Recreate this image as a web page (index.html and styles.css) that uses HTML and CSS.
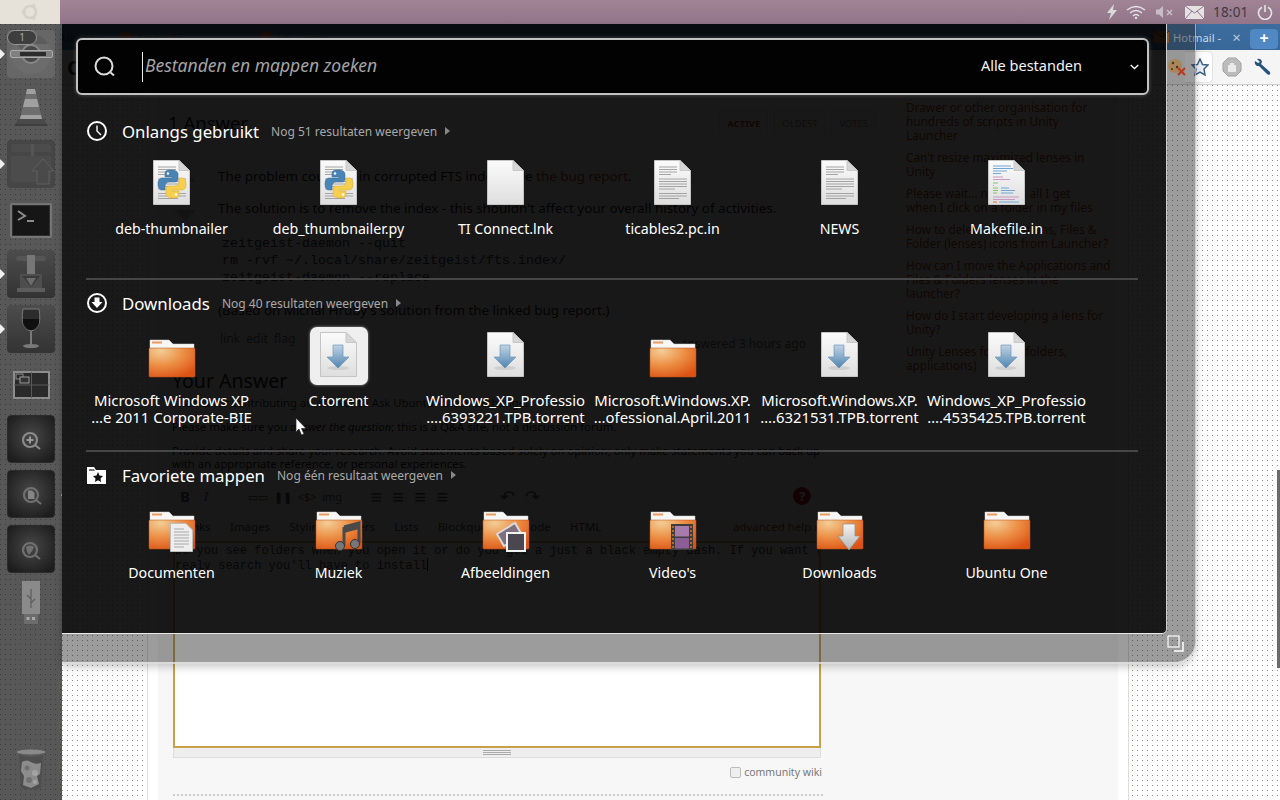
FILE: index.html
```html
<!DOCTYPE html>
<html lang="nl">
<head>
<meta charset="utf-8">
<title>Dash</title>
<link rel="stylesheet" href="styles.css">
</head>
<body>
<svg class="defs" width="0" height="0" aria-hidden="true">
  <defs>
    <linearGradient id="gDoc" x1="0" y1="0" x2="0" y2="1"><stop offset="0" stop-color="#fbfbfb"/><stop offset="1" stop-color="#dedede"/></linearGradient>
    <radialGradient id="gFolder" cx="0.25" cy="0.1" r="1"><stop offset="0" stop-color="#f3cd96"/><stop offset="0.5" stop-color="#ec8f45"/><stop offset="1" stop-color="#dc5213"/></radialGradient>
    <linearGradient id="gArrow" x1="0" y1="0" x2="0" y2="1"><stop offset="0" stop-color="#c2d4e4"/><stop offset="1" stop-color="#4f84b0"/></linearGradient>
    <linearGradient id="gGray" x1="0" y1="0" x2="0" y2="1"><stop offset="0" stop-color="#f4f4f4"/><stop offset="1" stop-color="#b4b4b4"/></linearGradient>

    <symbol id="doc" viewBox="0 0 64 48">
      <path d="M13.5 1.5H39L49.5 12V45.5H13.5Z" fill="url(#gDoc)" stroke="#c4c4c4"/>
      <path d="M39 1.5V11.5H49.5Z" fill="#d6d6d6" stroke="#c8c8c8"/>
    </symbol>
    <symbol id="lines" viewBox="0 0 64 48">
      <use href="#doc" width="64" height="48"/>
      <path d="M18 8h18M18 10.5h18M18 13h18M18 15.500h12M18 20h28M18 22.500h28M18 25h28M18 27.500h28M18 30h16M18 34.500h28M18 37h28M18 39.500h20" stroke="#a4a4a4" stroke-width="1"/>
    </symbol>
    <symbol id="python" viewBox="0 0 64 48">
      <use href="#lines" width="64" height="48"/>
      <path d="M31 11c-6 0-6 2-6 4v3h7v1h-10c-3 0-4 3-4 6s1 6 4 6h3v-4c0-2 2-4 4-4h6c2 0 3-1 3-3v-5c0-2-2-4-7-4z" fill="#4a84b5" stroke="#356a96" stroke-width=".5"/>
      <path d="M33 39c6 0 6-2 6-4v-3h-7v-1h10c3 0 4-3 4-6s-1-6-4-6h-3v4c0 2-2 4-4 4h-6c-2 0-3 1-3 3v5c0 2 2 4 7 4z" fill="#f6cf4f" stroke="#d4a92f" stroke-width=".5"/>
      <circle cx="28" cy="14.500" r="1.200" fill="#fff"/><circle cx="36" cy="35.500" r="1.200" fill="#fff"/>
    </symbol>
    <symbol id="code" viewBox="0 0 64 48">
      <use href="#doc" width="64" height="48"/>
      <path d="M18 7h18M18 9.500h20M18 12h14M18 14.500h8" stroke="#6fa8d6"/>
      <path d="M18 18h10M18 20.500h17" stroke="#c79ac0"/>
      <path d="M18 24h5M18 26.500h1M18 29h5M18 31.500h5M18 34h4" stroke="#84c76a"/>
      <path d="M26 29h8M26 31.500h14M26 34h12" stroke="#6fa8d6"/>
      <path d="M18 38h26M18 40.500h22" stroke="#c79ac0"/>
      <path d="M18 43h4" stroke="#d0704a"/><path d="M24 43h20" stroke="#6fa8d6"/>
    </symbol>
    <symbol id="torrent" viewBox="0 0 64 48">
      <use href="#doc" width="64" height="48"/>
      <ellipse cx="31" cy="37" rx="11" ry="2" fill="#cfcfcf"/>
      <path d="M26 14H36V26H42L31 37L20 26H26Z" fill="url(#gArrow)" stroke="#5f8fb8" stroke-width=".6"/>
    </symbol>
    <symbol id="folder" viewBox="0 0 64 48">
      <path d="M10 9H29L33 13H54V22H10Z" fill="#f7f7f5" stroke="#cfcfcf" stroke-width=".5"/>
      <rect x="12" y="10.500" width="10" height="2" fill="#ef9a5c"/>
      <rect x="9" y="17" width="46" height="29" rx="1" fill="url(#gFolder)" stroke="#b9501c" stroke-width=".5"/>
    </symbol>
  </defs>
</svg>

<div class="desktop">
  <header class="panel">
    <div class="panel-home">
      <svg width="20" height="20" viewBox="0 0 20 20"><circle cx="10" cy="10" r="6" fill="none" stroke="#d6d1c8" stroke-width="2.500"/><circle cx="3.500" cy="10" r="2" fill="#d6d1c8"/><circle cx="13.500" cy="4" r="2" fill="#d6d1c8"/><circle cx="13.500" cy="16" r="2" fill="#d6d1c8"/></svg>
    </div>
    <div class="panel-indicators">
      <svg class="ind-bolt" width="12" height="16" viewBox="0 0 12 16"><path d="M8 0L1 9H5L3 16L11 6H7Z" fill="#d9d9d9"/></svg>
      <svg class="ind-wifi" width="20" height="14" viewBox="0 0 20 14"><path d="M1 5Q10 -2 19 5M4 8Q10 3 16 8M7 11Q10 8 13 11" fill="none" stroke="#e4e4e4" stroke-width="1.500"/><circle cx="10" cy="13" r="1.200" fill="#e4e4e4"/></svg>
      <svg class="ind-mute" width="18" height="14" viewBox="0 0 18 14"><path d="M0 4.500H3L7 1V13L3 9.500H0Z" fill="#c8bcc6"/><path d="M11 5L16 10M16 5L11 10" stroke="#c8bcc6" stroke-width="1.500"/></svg>
      <svg class="ind-mail" width="19" height="13" viewBox="0 0 19 13"><rect width="19" height="13" fill="#e6e2e4"/><path d="M0 0L9.500 7L19 0M0 13L7 5M19 13L12 5" fill="none" stroke="#8f7585"/></svg>
      <span class="clock">18:01</span>
      <svg class="ind-power" width="16" height="16" viewBox="0 0 16 16"><path d="M5 3.200A6.500 6.500 0 1 0 11 3.200" fill="none" stroke="#e4e4e4" stroke-width="1.600"/><path d="M8 1V8" stroke="#e4e4e4" stroke-width="1.600"/></svg>
    </div>
  </header>

  <div class="workspace">
    <nav class="launcher">
      <div class="tile tile-chrome pip-left pip-right">
        <svg width="48" height="48" viewBox="0 0 48 48"><circle cx="24" cy="24" r="20" fill="#6c6c6c"/><path d="M24 4A20 20 0 0 1 41 14H24A10 10 0 0 0 15 20L8 12A20 20 0 0 1 24 4Z" fill="#5c5c5c"/><circle cx="24" cy="24" r="9" fill="#484848" stroke="#888" stroke-width="2"/></svg>
        <span class="badge">1</span>
        <span class="progress"><span class="progress-fill"></span></span>
      </div>
      <div class="tile tile-plain">
        <svg width="48" height="48" viewBox="0 0 48 48"><path d="M7 41H41L38 37H10Z" fill="#3e3e3e"/><path d="M20 4H28L36 38H12Z" fill="#6e6e6e"/><path d="M18 14H30L32 22H16ZM14 30H34L36 38H12Z" fill="#a0a0a0"/><path d="M20 4H28L29 9H19Z" fill="#a0a0a0"/><path d="M10 34H38V39H10Z" fill="#4a4a4a"/></svg>
      </div>
      <div class="tile tile-box pip-left">
        <svg width="48" height="48" viewBox="0 0 48 48"><rect x="4" y="4" width="40" height="38" rx="3" fill="#4c4c4c"/><path d="M4 12H44V16H4Z" fill="#464646"/><rect x="24" y="4" width="3" height="12" fill="#555"/><path d="M36 19L47 31H42V44H30V31H25Z" fill="#4a4a4a" stroke="#5e5e5e"/></svg>
      </div>
      <div class="tile tile-plain">
        <svg width="48" height="48" viewBox="0 0 48 48"><rect x="4" y="9" width="40" height="33" rx="1" fill="#2e2e2e" stroke="#757575" stroke-width="2"/><rect x="6" y="11" width="36" height="29" fill="#161616"/><path d="M11 16L18 21L11 25" fill="none" stroke="#8c8c8c" stroke-width="2"/><path d="M20 26H27" stroke="#8c8c8c" stroke-width="2"/></svg>
      </div>
      <div class="tile tile-dark pip-left">
        <svg width="48" height="48" viewBox="0 0 48 48"><rect x="9" y="6" width="30" height="5" rx="2.500" fill="#555"/><rect x="20" y="5" width="8" height="27" fill="#777"/><path d="M13 24H35V38H13Z" fill="#4e4e4e"/><path d="M15 26H33L24 37Z" fill="#3a3a3a"/><path d="M19 28H29L24 36Z" fill="#6c6c6c"/><rect x="10" y="38" width="28" height="4" fill="#5c5c5c"/></svg>
      </div>
      <div class="tile tile-dark pip-left">
        <svg width="48" height="48" viewBox="0 0 48 48"><path d="M16 4H32Q34 16 31 21Q28 26 24 26Q20 26 17 21Q14 16 16 4Z" fill="#2c2c2c" stroke="#7a7a7a"/><path d="M16 14H32Q33 20 28 24Q24 26 20 24Q15 20 16 14Z" fill="#0f0f0f"/><rect x="23" y="26" width="2" height="14" fill="#7a7a7a"/><ellipse cx="24" cy="41" rx="8" ry="2" fill="#7a7a7a"/></svg>
      </div>
      <div class="tile tile-plain">
        <svg width="48" height="48" viewBox="0 0 48 48"><rect x="7" y="12" width="35" height="26" fill="#2a2a2a" stroke="#8c8c8c" stroke-width="2"/><path d="M24.500 12V38M7 25H42" stroke="#5a5a5a"/><rect x="9" y="14" width="7" height="5" fill="none" stroke="#8c8c8c"/><rect x="13" y="17" width="9" height="6" fill="#333" stroke="#9c9c9c"/></svg>
      </div>
      <div class="tile tile-lens">
        <svg width="48" height="48" viewBox="0 0 48 48"><circle cx="23" cy="25" r="7" fill="none" stroke="#8a8a8a" stroke-width="2.200"/><path d="M28 30L33 34" stroke="#8a8a8a" stroke-width="2.200"/><path d="M19.500 25H26.500M23 21.500V28.500" stroke="#9a9a9a" stroke-width="2"/></svg>
      </div>
      <div class="tile tile-lens pip-right">
        <svg width="48" height="48" viewBox="0 0 48 48"><circle cx="24" cy="25" r="7" fill="none" stroke="#707070" stroke-width="2.200"/><path d="M29 30L34 34" stroke="#707070" stroke-width="2.200"/><path d="M21 20.500H25L27.500 23V29H21Z" fill="#858585"/></svg>
      </div>
      <div class="tile tile-lens">
        <svg width="48" height="48" viewBox="0 0 48 48"><circle cx="23" cy="25" r="7" fill="none" stroke="#707070" stroke-width="2.200"/><path d="M28 30L33 34" stroke="#707070" stroke-width="2.200"/><path d="M19 22Q23 19 27 22L25 26L22 30L20 27Z" fill="#707070"/></svg>
      </div>
      <div class="tile tile-plain">
        <svg width="48" height="48" viewBox="0 0 48 48"><rect x="15" y="1" width="18" height="33" fill="#8a8a8a"/><rect x="17" y="34" width="14" height="10" fill="#6c6c6c"/><rect x="19.500" y="37" width="3" height="3" fill="#aaa"/><rect x="25" y="37" width="3" height="3" fill="#aaa"/><path d="M24 9V28M24 19L20 15M24 23L28 19" stroke="#5c5c5c" stroke-width="1.200" fill="none"/></svg>
      </div>
      <div class="tile tile-plain tile-trash">
        <svg width="48" height="48" viewBox="0 0 48 48"><ellipse cx="24" cy="6" rx="15" ry="3" fill="#8a8a8a" stroke="#5a5a5a"/><path d="M12 9Q24 13 36 9L34 42Q24 45 14 42Z" fill="#4e4e4e"/><path d="M15 16Q20 13 24 16T34 17L33 28L30 30L32 38L24 42L16 39L17 30L14 25Z" fill="#8c8c8c"/><circle cx="20" cy="22" r="2.500" fill="#707070"/><circle cx="28" cy="27" r="3" fill="#a4a4a4"/><circle cx="22" cy="34" r="3" fill="#727272"/><circle cx="28" cy="36" r="2" fill="#a4a4a4"/></svg>
      </div>
    </nav>

    <main class="browser">
      <div class="tabstrip">
        <span class="tab tab-first">Ubuntu</span>
        <span class="tab"><i class="tab-fav"></i>Unity "Fi</span>
        <span class="tab"><i class="tab-fav"></i>ub... How</span>
        <span class="tab-spacer"></span>
        <span class="tab-current">
          <svg class="tab-mail" width="15" height="12" viewBox="0 0 15 12"><rect width="15" height="12" fill="#e2762a"/><path d="M0 0L7.500 6L15 0" fill="none" stroke="#3a2418"/></svg>
          <span class="tab-title">Hotmail -</span>
          <span class="tab-close">×</span>
        </span>
        <span class="tab-new">+</span>
      </div>
      <div class="toolbar">
        <span class="reload">C</span>
        <span class="url">askubuntu.com/questions/78023/files-and-folders-lens-does-not-show-anything</span>
        <svg class="tool-cookie" width="20" height="18" viewBox="0 0 20 18"><circle cx="8" cy="8" r="7" fill="#a8865a"/><circle cx="6" cy="5" r="1.200" fill="#4a3520"/><circle cx="10" cy="9" r="1.200" fill="#4a3520"/><circle cx="5" cy="11" r="1" fill="#4a3520"/><path d="M11 10L18 17M18 10L11 17" stroke="#b8381c" stroke-width="2"/></svg>
        <svg class="tool-star" width="18" height="18" viewBox="0 0 18 18"><path d="M9 1L11.500 6.500L17 7L13 11L14 17L9 14L4 17L5 11L1 7L6.500 6.500Z" fill="#eef2f6" stroke="#3b6188" stroke-width="1.500"/></svg>
        <svg class="tool-stop" width="20" height="20" viewBox="0 0 20 20"><path d="M6 1H14L19 6V14L14 19H6L1 14V6Z" fill="#bcbcbc" stroke="#a2a2a2"/><path d="M7 15V8M9 15V6M11 15V6M13 15V8" stroke="#f4f4f4" stroke-width="1.700"/></svg>
        <svg class="tool-wrench" width="18" height="18" viewBox="0 0 18 18"><path d="M3 1Q7 0 8 4L7 6L16 14Q17 16 15 17L13 16L5 8L3 8Q0 6 1 3L4 5L6 4Z" fill="#28527e"/></svg>
      </div>
      <div class="page">
        <div class="sheet">
          <div class="panel-inner">
            <section class="main-col">
              <div class="answers-head">
                <h2 class="answers-title">1 Answer</h2>
                <div class="sort-tabs"><span class="sort-on">ACTIVE</span><span>OLDEST</span><span>VOTES</span></div>
              </div>
              <div class="answer">
                <div class="votes">
                  <span class="vote-up"></span>
                  <span class="vote-down"></span>
                </div>
                <div class="answer-body">
                  <p class="para">The problem could be in corrupted FTS index - see <a class="red" href="#">the bug report</a>.</p>
                  <p class="para para-2">The solution is to remove the index - this shouldn't affect your overall history of activities.</p>
                  <pre class="code">zeitgeist-daemon --quit
rm -rvf ~/.local/share/zeitgeist/fts.index/
zeitgeist-daemon --replace</pre>
                  <p class="para para-3">(Based on Michal Hruby's solution from the linked bug report.)</p>
                  <div class="post-foot"><span class="post-links">link&nbsp; edit&nbsp; flag</span><span class="post-time">answered 3 hours ago</span></div>
                </div>
              </div>
              <div class="answer-form">
                <h2 class="form-title">Your Answer</h2>
                <p class="notice n1">Thanks for contributing an answer to Ask Ubuntu - Stack Exchange!</p>
                <p class="notice n2">Please make sure you <em>answer the question</em>; this is a Q&amp;A site, not a discussion forum.</p>
                <p class="notice n3">Provide details and share your research. Avoid statements based solely on opinion; only make statements you can back up with an appropriate reference, or personal experiences.</p>
                <div class="editor-bar">
                  <b class="ed-b">B</b><i class="ed-i">I</i><span class="ed-tools">▭▭ &nbsp;❚❚ &nbsp;&lt;$&gt; &nbsp;img</span><span class="ed-list">≡ &nbsp;≡ &nbsp;≡ &nbsp;≡</span><span class="ed-undo">↶ &nbsp;↷</span><span class="ed-help">?</span>
                </div>
                <div class="editor-tabs"><span>Links</span><span>Images</span><span>Styling/Headers</span><span>Lists</span><span>Blockquotes</span><span>Code</span><span>HTML</span><span class="adv">advanced help »</span></div>
                <div class="textarea">Do you see folders when you open it or do you get a just a black empty dash. If you want to
realy search you'll have to install<span class="text-caret"></span></div>
                <div class="grippie"><span class="grip"></span></div>
                <label class="wiki"><span class="wiki-box"></span>community wiki</label>
                <div class="dotted-rule"></div>
              </div>
            </section>
            <aside class="side-col">
              <a class="side-link" href="#">Drawer or other organisation for hundreds of scripts in Unity Launcher</a>
              <a class="side-link" href="#">Can't resize maximized lenses in Unity</a>
              <a class="side-link" href="#">Please wait… no file is all I get<br>when I click on a folder in my files</a>
              <a class="side-link" href="#">How to delete Applications, Files &amp; Folder (lenses) icons from Launcher?</a>
              <a class="side-link" href="#">How can I move the Applications and Files &amp; Folders lenses in the launcher?</a>
              <a class="side-link" href="#">How do I start developing a lens for Unity?</a>
              <a class="side-link" href="#">Unity Lenses for files/folders, applications)</a>
            </aside>
          </div>
        </div>
        <div class="scroll-thumb"></div>
      </div>
    </main>
  </div>

  <div class="dash-frame">
    <div class="dash">
      <div class="searchbar">
        <svg class="search-icon" width="26" height="26" viewBox="0 0 26 26"><circle cx="12" cy="12" r="8.500" fill="none" stroke="#dcdcdc" stroke-width="2"/><path d="M18.500 18.500L22 21.500" stroke="#dcdcdc" stroke-width="2"/></svg>
        <span class="caret"></span>
        <span class="placeholder">Bestanden en mappen zoeken</span>
        <span class="filter">Alle bestanden</span>
        <svg class="chevron" width="9" height="6" viewBox="0 0 9 6"><path d="M.7 1L4.500 4.500L8.300 1" fill="none" stroke="#fff" stroke-width="1.300"/></svg>
      </div>

      <section class="group group-first">
        <div class="group-head">
          <svg class="head-icon" width="22" height="22" viewBox="0 0 22 22"><circle cx="11" cy="11" r="9" fill="none" stroke="#fff" stroke-width="2"/><path d="M11 5.500V11L15 15" fill="none" stroke="#fff" stroke-width="1.400"/></svg>
          <h3 class="group-title">Onlangs gebruikt</h3>
          <span class="more">Nog 51 resultaten weergeven</span>
          <span class="more-arrow"></span>
        </div>
        <div class="grid">
          <div class="item"><div class="icon"><svg width="64" height="48"><use href="#python"/></svg></div><div class="label">deb-thumbnailer</div></div>
          <div class="item"><div class="icon"><svg width="64" height="48"><use href="#python"/></svg></div><div class="label">deb_thumbnailer.py</div></div>
          <div class="item"><div class="icon"><svg width="64" height="48"><use href="#doc"/></svg></div><div class="label">TI Connect.lnk</div></div>
          <div class="item"><div class="icon"><svg width="64" height="48"><use href="#lines"/></svg></div><div class="label">ticables2.pc.in</div></div>
          <div class="item"><div class="icon"><svg width="64" height="48"><use href="#lines"/></svg></div><div class="label">NEWS</div></div>
          <div class="item"><div class="icon"><svg width="64" height="48"><use href="#code"/></svg></div><div class="label">Makefile.in</div></div>
        </div>
      </section>

      <section class="group">
        <div class="group-head">
          <svg class="head-icon" width="22" height="22" viewBox="0 0 22 22"><circle cx="11" cy="11" r="9" fill="none" stroke="#fff" stroke-width="2"/><path d="M8.500 5.500H13.500V10H16.500L11 16L5.500 10H8.500Z" fill="#fff"/></svg>
          <h3 class="group-title">Downloads</h3>
          <span class="more">Nog 40 resultaten weergeven</span>
          <span class="more-arrow"></span>
        </div>
        <div class="grid">
          <div class="item"><div class="icon"><svg width="64" height="48"><use href="#folder"/></svg></div><div class="label label-long">Microsoft Windows XP<br>…e 2011 Corporate-BIE</div></div>
          <div class="item"><div class="icon icon-selected"><svg width="64" height="48"><use href="#torrent"/></svg></div><div class="label">C.torrent</div></div>
          <div class="item"><div class="icon"><svg width="64" height="48"><use href="#torrent"/></svg></div><div class="label label-long">Windows_XP_Professio<br>….6393221.TPB.torrent</div></div>
          <div class="item"><div class="icon"><svg width="64" height="48"><use href="#folder"/></svg></div><div class="label label-long">Microsoft.Windows.XP.<br>…ofessional.April.2011</div></div>
          <div class="item"><div class="icon"><svg width="64" height="48"><use href="#torrent"/></svg></div><div class="label label-long">Microsoft.Windows.XP.<br>….6321531.TPB.torrent</div></div>
          <div class="item"><div class="icon"><svg width="64" height="48"><use href="#torrent"/></svg></div><div class="label label-long">Windows_XP_Professio<br>….4535425.TPB.torrent</div></div>
        </div>
      </section>

      <section class="group">
        <div class="group-head">
          <svg class="head-icon" width="22" height="22" viewBox="0 0 22 22"><path d="M1 20V3H8L10 6H20V20Z" fill="#fff"/><path d="M3 5H8L9 7H3Z" fill="#777"/><path d="M12 8L13.500 11.500L17 12L14.500 14.500L15 18L12 16.200L9 18L9.500 14.500L7 12L10.500 11.500Z" fill="#111"/></svg>
          <h3 class="group-title">Favoriete mappen</h3>
          <span class="more">Nog één resultaat weergeven</span>
          <span class="more-arrow"></span>
        </div>
        <div class="grid">
          <div class="item"><div class="icon"><svg width="64" height="48"><use href="#folder"/><path d="M30.500 20.500H46L52.500 27V48.500H30.500Z" fill="#eee" stroke="#bdbdbd"/><path d="M34 26H44M34 29H49M34 32H49M34 35H49M34 38H49M34 41H49M34 44H44" stroke="#a8a8a8"/></svg></div><div class="label">Documenten</div></div>
          <div class="item"><div class="icon"><svg width="64" height="48"><use href="#folder"/><path d="M37 24L52 20V40" fill="none" stroke="#4a4a4a" stroke-width="3"/><path d="M37 24V43" stroke="#4a4a4a" stroke-width="3"/><path d="M37 24L52 20V26L37 30Z" fill="#4a4a4a"/><circle cx="33" cy="43" r="4.500" fill="#777" stroke="#333"/><circle cx="48" cy="41" r="4.500" fill="#777" stroke="#333"/></svg></div><div class="label">Muziek</div></div>
          <div class="item"><div class="icon"><svg width="64" height="48"><use href="#folder"/><path d="M23 31L41 20L48 32L30 43Z" fill="#7d6f7e" stroke="#d8d8d8" stroke-width="2"/><rect x="33" y="30" width="18" height="18" fill="#4b4750" stroke="#f2f2f2" stroke-width="2"/></svg></div><div class="label">Afbeeldingen</div></div>
          <div class="item"><div class="icon"><svg width="64" height="48"><use href="#folder"/><rect x="30" y="21" width="22" height="26" fill="#3d3d3d"/><rect x="34" y="23" width="14" height="10.500" fill="#a67cad"/><rect x="34" y="35" width="14" height="10.500" fill="#8b5f95"/><path d="M32 23v23M50 23v23" stroke="#b06a30" stroke-width="2" stroke-dasharray="2 2"/></svg></div><div class="label">Video's</div></div>
          <div class="item"><div class="icon"><svg width="64" height="48"><use href="#folder"/><path d="M35 21H47V33H52L41 47L30 33H35Z" fill="url(#gGray)" stroke="#8c8c8c" stroke-width=".7"/></svg></div><div class="label">Downloads</div></div>
          <div class="item"><div class="icon"><svg width="64" height="48"><use href="#folder"/></svg></div><div class="label">Ubuntu One</div></div>
        </div>
      </section>
    </div>
    <svg class="resize-grip" width="18" height="18" viewBox="0 0 18 18"><rect x="1" y="1" width="11" height="11" fill="none" stroke="#fff" stroke-width="1.200"/><path d="M16 7V16H7" fill="none" stroke="#fff" stroke-width="1.500"/></svg>
  </div>

  <svg class="cursor" width="12" height="18" viewBox="0 0 12 18"><path d="M1 0V14L4 11L6.500 17L9 16L6.500 10.500H11Z" fill="#fff" stroke="#222" stroke-width=".7"/></svg>
</div>
</body>
</html>
```

FILE: styles.css
```css
* { box-sizing: border-box; }
html, body { margin: 0; padding: 0; width: 1280px; height: 800px; overflow: hidden; background: #fff; }
body { font-family: "Noto Sans", "Open Sans", sans-serif; color: #000; }
.defs { position: absolute; }
a { text-decoration: none; }
h2, h3, p, pre { margin: 0; font-weight: normal; }

.desktop { position: relative; width: 1280px; height: 800px; display: flex; flex-direction: column; overflow: hidden; }

/* top panel */
.panel { height: 24px; flex: none; display: flex; background: linear-gradient(#a08394, #94758a); }
.panel-home { width: 60px; display: flex; align-items: center; justify-content: center; background: #e7e2d9; }
.panel-indicators { margin-left: auto; display: flex; align-items: center; }
.ind-bolt { margin-right: 8px; }
.ind-wifi { margin-right: 10px; }
.ind-mute { margin-right: 11px; }
.ind-mail { margin-right: 9px; }
.clock { width: 35px; font-size: 13.500px; color: #3f3a3e; letter-spacing: .2px; white-space: nowrap; margin-right: 9px; }
.ind-power { margin-right: 7px; }

.workspace { flex: 1; display: flex; min-height: 0; }

/* launcher */
.launcher {
  width: 62px; flex: none; display: flex; flex-direction: column; gap: 7px; padding: 6px 0 6px 7px;
  background-color: #585858;
  background-image: conic-gradient(at 1px 1px, transparent 75%, #3c3c3c 0);
  background-size: 5px 5px;
}
.tile { position: relative; width: 48px; height: 48px; flex: none; border-radius: 4px; }
.tile-plain { background: transparent; }
.tile-chrome { background: #676767; }
.tile-box { background: #464646; }
.tile-dark { background: linear-gradient(#4c4c4c, #333); }
.tile-lens { background: radial-gradient(circle at 50% 45%, #484848, #1d1d1d 85%); border: 1px solid #2b2b2b; }
.tile-lens svg { display: block; margin: -1px; }
.tile-trash { margin-top: auto; }
.pip-left::before, .pip-right::after { content: ""; position: absolute; top: 19px; border: 5px solid transparent; }
.pip-left::before { left: -7px; border-left-color: #f0f0f0; }
.pip-right::after { right: -12px; border-right-color: #f0f0f0; }
.badge { position: absolute; left: 0; top: 0; width: 30px; height: 15px; border: 1px solid #969696; border-radius: 8px; background: #3e3e3e; color: #aaa; font-size: 10px; line-height: 13px; text-align: center; }
.progress { position: absolute; left: 3px; top: 20px; width: 43px; height: 8px; border: 1px solid #ababab; border-radius: 2px; background: #808080; padding: 1px; }
.progress-fill { display: block; width: 26px; height: 100%; background: #2c2c2c; margin-left: 8px; }

/* browser */
.browser { flex: 1; min-width: 0; display: flex; flex-direction: column; }
.tabstrip { height: 26px; flex: none; display: flex; align-items: center; background: linear-gradient(#3d6d9f, #38689a); color: #cfdbe8; font-size: 11.200px; overflow: hidden; }
.tab { display: flex; align-items: center; gap: 6px; width: 140px; white-space: nowrap; color: #222; }
.tab-first { width: 58px; }
.tab-fav { width: 12px; height: 12px; border-radius: 50%; background: #d9521f; }
.tab-spacer { flex: 1; }
.tab-current { display: flex; align-items: center; height: 26px; width: 96px; }
.tab-mail { flex: none; margin-right: 4px; }
.tab-title { color: #cdd8e6; white-space: nowrap; }
.tab-close { margin-left: 11px; color: #b7c8da; font-size: 15px; }
.tab-new { width: 28px; height: 20px; margin: 4px 2px 0 0; background: #4f88c3; border-radius: 4px; color: #fff; font-weight: bold; font-size: 16px; line-height: 18px; text-align: center; }
.toolbar { height: 35px; flex: none; display: flex; align-items: center; background: #f5f5f5; border-bottom: 1px solid #d0d0d0; padding-left: 5px; font-size: 14px; }
.reload { font-size: 20px; font-weight: bold; width: 16px; }
.url { white-space: nowrap; flex: 1; min-width: 0; overflow: hidden; }
.tool-cookie { margin: 0 -2px 0 4px; position: relative; z-index: 1; }
.tool-star { box-sizing: content-box; padding: 6px 3px 6px 6px; margin-right: 9px; background: #fff; border: 1px solid #e2e2e2; border-left: 0; border-radius: 0 5px 5px 0; }
.tool-stop { margin-right: 12px; }
.tool-wrench { margin-right: 8px; }

.page {
  position: relative; flex: 1; min-height: 0;
  background-color: #fff;
  background-image: conic-gradient(at 1px 1px, transparent 75%, #8f8a84 0);
  background-size: 5px 5px;
  padding-left: 85px;
}
.sheet { width: 982px; height: 800px; background: #fff; border-left: 1px solid #ddd; border-right: 1px solid #ddd; padding: 0 10px; }
.panel-inner { height: 100%; background: #f7f7f7; padding-left: 10px; display: flex; }
.main-col { width: 712px; flex: none; }
.side-col { margin-left: 26px; padding-top: 15px; display: flex; flex-direction: column; gap: 8px; width: 206px; }
.side-link { font-size: 11.800px; line-height: 14px; color: #a32a00; }
.scroll-thumb { position: absolute; right: 0; top: 385px; width: 3px; height: 198px; background: #6a6a6a; }

.answers-head { display: flex; align-items: center; justify-content: space-between; height: 24px; margin-top: 26px; }
.answers-title { font-size: 18.500px; line-height: 24px; }
.sort-tabs { display: flex; gap: 6px; font-size: 9.500px; color: #777; padding-right: 4px; }
.sort-tabs span { padding: 5px 7px; border: 1px solid #e2e2e2; border-bottom: 0; }
.sort-on { color: #a32a00; font-weight: bold; }
.answer { display: flex; margin-top: 32px; }
.votes { width: 50px; flex: none; display: flex; flex-direction: column; align-items: center; padding: 4px 16px 0 0; gap: 28px; }
.vote-up { width: 0; height: 0; border: 11px solid transparent; border-bottom-color: #bbb; border-top: 0; }
.vote-down { width: 0; height: 0; border: 11px solid transparent; border-top-color: #bbb; border-bottom: 0; }
.answer-body { width: 660px; }
.para { font-size: 13.400px; line-height: 18px; white-space: nowrap; }
.para-2 { margin-top: 14px; }
.para-3 { margin-top: 13px; }
.red { color: #a32a00; }
.code { margin-top: 18px; height: 53px; background: #eee; font-family: "Liberation Mono", monospace; font-size: 13.330px; line-height: 17px; padding-left: 4px; color: #222; }
.post-foot { display: flex; justify-content: space-between; margin-top: 12px; font-size: 12px; line-height: 16px; color: #555; padding-right: 72px; }
.post-links { padding-left: 2px; }
.post-time { position: relative; top: 5px; }
.answer-form { margin-left: 4px; margin-top: 21px; }
.form-title { font-size: 19.500px; line-height: 26px; }
.notice { font-size: 11.300px; line-height: 13px; }
.n1 { margin-top: 1px; line-height: 16px; color: #222; }
.n2 { margin-top: 8px; line-height: 16px; }
.n3 { margin-top: 9px; width: 650px; }
.editor-bar { display: flex; align-items: center; width: 650px; height: 24px; margin-top: 14px; font-size: 13px; color: #444; padding-left: 8px; }
.ed-b { font-size: 15px; margin-right: 14px; }
.ed-i { margin-right: 40px; }
.ed-tools { width: 122px; white-space: nowrap; font-size: 11px; }
.ed-list { width: 130px; white-space: nowrap; font-size: 20px; }
.ed-undo { white-space: nowrap; font-size: 18px; }
.ed-help { margin-left: auto; margin-right: 11px; width: 18px; height: 18px; border-radius: 50%; background: #a02; color: #fff; text-align: center; font-weight: bold; line-height: 18px; }
.editor-tabs { display: flex; gap: 19.400px; height: 22px; margin-top: 11px; width: 647px; margin-left: 1px; font-size: 11.450px; line-height: 16px; color: #333; white-space: nowrap; padding-left: 10px; }
.adv { margin-left: auto; color: #a32a00; }
.textarea { margin-left: 1px; width: 648px; height: 207px; border: 2px solid #c9a14a; background: #fff; font-family: "Liberation Mono", monospace; font-size: 12px; line-height: 14px; white-space: pre; padding: 1px 0 0 0; color: #333; overflow: hidden; }
.text-caret { display: inline-block; width: 1px; height: 13px; background: #000; vertical-align: -2px; }
.grippie { margin-left: 1px; width: 648px; height: 10px; background: #eee; border: 1px solid #ddd; border-top: 0; display: flex; justify-content: center; align-items: center; }
.grip { width: 28px; height: 5px; background: repeating-linear-gradient(#aaa 0 1px, transparent 1px 2px); }
.wiki { display: flex; align-items: center; justify-content: flex-end; gap: 3px; width: 650px; height: 16px; margin-top: 6px; font-size: 10.500px; color: #777; }
.wiki-box { width: 11px; height: 11px; border: 1px solid #bbb; border-radius: 2px; background: #eee; }
.dotted-rule { width: 650px; margin-left: 1px; margin-top: 14px; border-top: 2px dotted #ccc; }

/* dash overlay */
.dash-frame {
  position: absolute; left: 62px; top: 24px; width: 1134px; height: 640px;
  background: rgba(40, 40, 40, .46);
  border-right: 1px solid rgba(255, 255, 255, .5);
  border-bottom: 2px solid rgba(235, 235, 235, .8);
  border-bottom-right-radius: 22px;
  box-shadow: 0 3px 8px rgba(0, 0, 0, .22);
}
.dash {
  width: 1105px; height: 610px; padding: 14px 0 0 14px;
  background: rgba(0, 0, 0, .84);
  border-right: 1px solid #cfcfcf;
  border-bottom: 1px solid #e8e8e8;
  border-bottom-right-radius: 5px;
}
.searchbar {
  display: flex; align-items: center; width: 1073px; height: 57px; margin-bottom: 11px;
  background: #020202; border: 2px solid #c2c2c2; border-radius: 6px;
  box-shadow: 0 0 4px rgba(255, 255, 255, .25); padding-left: 14px;
}
.search-icon { flex: none; }
.caret { width: 1px; height: 30px; background: #eee; margin-left: 24px; }
.placeholder { margin: 0 0 4px 2px; font-style: italic; font-size: 17.500px; color: #a4a4a4; white-space: nowrap; }
.filter { margin: 0 0 4px auto; font-size: 14.500px; color: #f4f4f4; white-space: nowrap; }
.chevron { margin: 0 8px 0 48px; flex: none; }
.group { width: 1052px; height: 172px; margin-left: 10px; border-top: 2px solid #464646; }
.group-first { border-top-color: transparent; }
.group-head { display: flex; align-items: center; height: 47px; padding-bottom: 1px; }
.head-icon { flex: none; margin-right: 14px; }
.group-title { font-size: 16.800px; color: #fff; white-space: nowrap; }
.more { margin-left: 12px; font-size: 12px; color: #a9a9a9; white-space: nowrap; }
.more-arrow { margin-left: 8px; width: 0; height: 0; border-left: 5px solid #888; border-top: 4px solid transparent; border-bottom: 4px solid transparent; }
.grid { display: grid; grid-template-columns: repeat(6, 167px); margin: 0 0 0 2px; }
.item { display: flex; flex-direction: column; align-items: center; }
.icon { width: 58px; height: 58px; flex: none; display: flex; justify-content: center; padding-top: 4px; border-radius: 7px; }
.icon svg { flex: none; overflow: visible; }
.icon-selected { background: #efefef; box-shadow: 0 0 3px rgba(255, 255, 255, .6); }
.label { margin-top: 7px; width: 167px; text-align: center; font-size: 14.200px; line-height: 17px; color: #fff; white-space: nowrap; }
.label-long { font-size: 14.900px; }
.resize-grip { position: absolute; left: 1105px; top: 611px; }
.cursor { position: absolute; left: 295px; top: 418px; }
```
